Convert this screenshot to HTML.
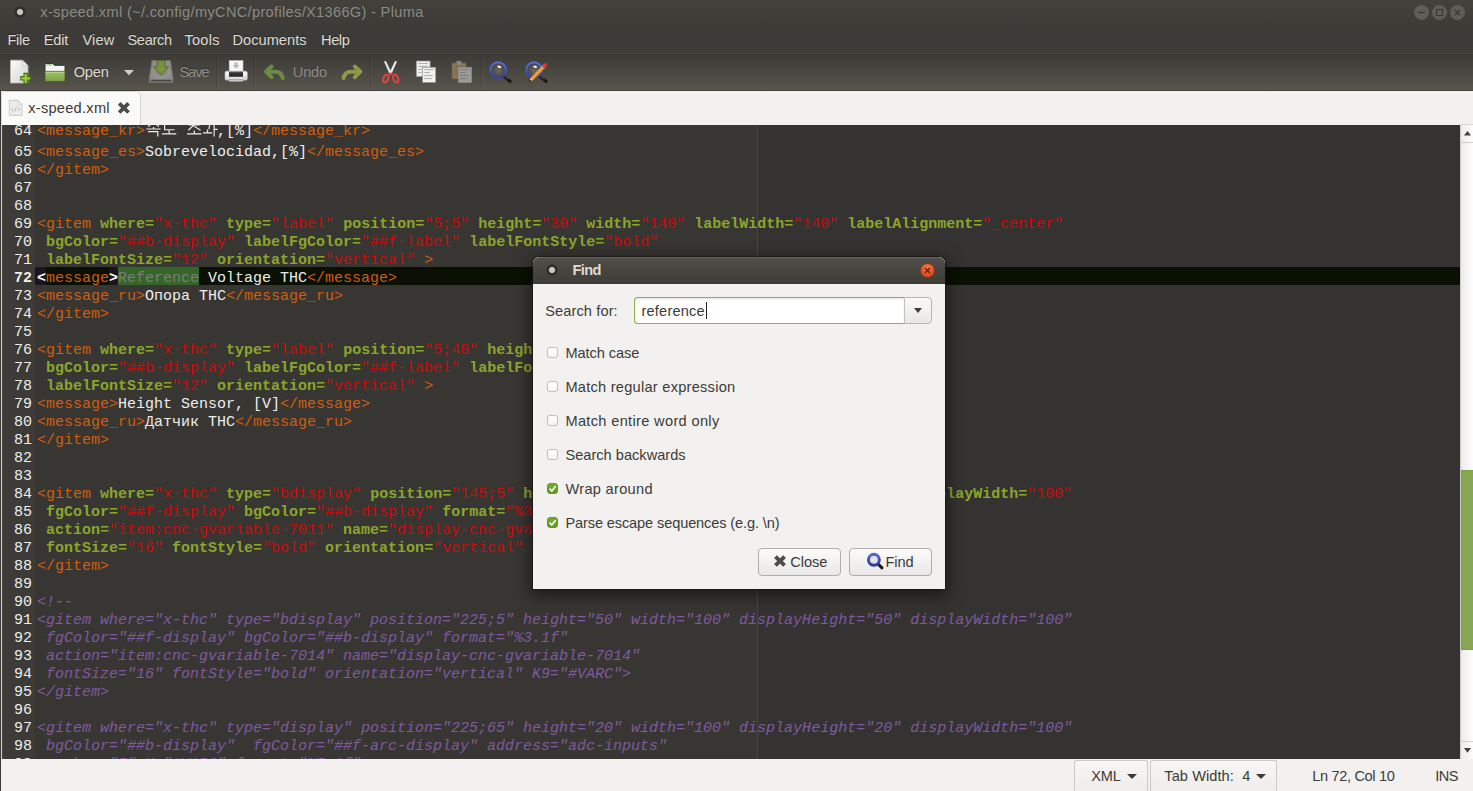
<!DOCTYPE html>
<html><head><meta charset="utf-8"><title>Pluma</title>
<style>
*{box-sizing:border-box;margin:0;padding:0}
html,body{width:1473px;height:791px;overflow:hidden;background:#3c3b37}
body{position:relative;font-family:"Liberation Sans",sans-serif;font-size:14.5px;color:#dfdbd2}
.abs{position:absolute}
.lbl{position:absolute;white-space:pre;line-height:1;font-size:14.6px;z-index:5}
/* title bar */
#titlebar{position:absolute;left:0;top:0;width:1473px;height:25px;background:linear-gradient(#42413c,#3c3b37)}
#title{left:40px;top:4px;color:#8b8a84;font-size:14.6px}
.wbtn{position:absolute;top:5px;width:15px;height:15px;border-radius:50%;background:#5e5d58}
/* menubar */
#menubar{position:absolute;left:0;top:25px;width:1473px;height:28px;background:#3c3b37}
.mi{top:7px;color:#dfdbd2;font-size:14.6px}
/* toolbar */
#toolbar{position:absolute;left:0;top:53px;width:1473px;height:38px;background:linear-gradient(#3b3a36 0,#57554c 36px,#3f3e38 36px,#3f3e38 37px);border-top:1px solid #44433e}
.tl{top:11px;font-size:14.6px}
.tsep{position:absolute;top:1px;width:2px;height:34px;background:linear-gradient(90deg,rgba(0,0,0,.16) 50%,rgba(255,255,255,.05) 50%)}
/* tab bar */
#tabbar{position:absolute;left:1px;top:91px;width:1472px;height:34px;background:#f2f1f0}
#tab{position:absolute;left:0;top:0;width:140px;height:34px;background:#fafaf9;border:1px solid #d9d6d1;border-bottom:none;border-radius:5px 5px 0 0}
/* editor */
#editor{position:absolute;left:1px;top:125px;width:1459px;height:634px;background:#383633;overflow:hidden;font-family:"Liberation Mono",monospace;font-size:15px;color:#eeeeec;border-left:2px solid #45443f}
#gutter{position:absolute;left:0;top:0;width:32px;height:634px;background:#3c3b37}
#rmar{position:absolute;left:755px;top:0;width:702px;height:634px;background:#343331}
#margin{position:absolute;left:754px;top:0;width:1px;height:634px;background:#4a4743}
.ln{position:absolute;left:0;width:1458px;height:18px;line-height:18px;white-space:pre}
.ln .no{position:absolute;left:0;top:3px;width:29px;text-align:right;color:#eeeeec}
.ln .tx{position:absolute;left:34px;top:3px}
.ln.cur{background:linear-gradient(90deg,transparent 32px,#0a1003 32px)}
.hb{position:absolute;top:0;height:18px}
.ln.cur .no{font-weight:bold}
.t{color:#d25d0a}
.a{color:#8aa62b;font-weight:bold}
.v{color:#cc0a0a}
.c{color:#7f5a9e;font-style:italic}
.bm{color:#fff;font-weight:bold}
.sel{color:#7b7d79}
.kr{display:inline-block;width:72px;height:18px;vertical-align:top}
/* scrollbar */
#vscroll{position:absolute;left:1460px;top:124px;width:13px;height:636px;background:linear-gradient(90deg,#ecebe9,#f4f3f2 5px,#fdfdfd);border-left:1px solid #d2cfcb;border-top:1px solid #d8d5d1;border-bottom:1px solid #d8d5d1}
.sline{position:absolute;left:0;width:12px;height:1px;background:#d2cfcb}
#thumb{position:absolute;left:1461px;top:470px;width:12px;height:180px;background:#87a752;border:1px solid #7b9c49;border-right:none}
/* status bar */
#status{position:absolute;left:1px;top:759px;width:1472px;height:32px;background:#f2f1f0;color:#3c3b37}
.sbtn{position:absolute;top:1px;height:32px;border:1px solid #cdcac5;border-bottom:none;border-radius:3px 3px 0 0;background:linear-gradient(#f7f6f5,#eeedeb)}
.sl{top:10px;color:#3c3b37;font-size:14.6px}
.tri{position:absolute;width:0;height:0;border-left:5px solid transparent;border-right:5px solid transparent;border-top:5.5px solid #3e3d3a}
/* dialog */
#dshadow{position:absolute;left:533px;top:257px;width:412px;height:332px;border-radius:6px 6px 0 0;box-shadow:0 0 0 1px rgba(20,19,18,.55),0 4px 16px 3px rgba(0,0,0,.5)}
#dialog{position:absolute;left:533px;top:257px;width:412px;height:332px;background:#f2f1f0;border-radius:6px 6px 0 0;overflow:hidden;color:#3c3b37}
#dtitle{position:absolute;left:0;top:0;width:412px;height:27px;background:linear-gradient(#4f4e48,#3d3c38);border-radius:6px 6px 0 0;border-top:1px solid #62615a}
.dl{color:#3c3b37;font-size:14.6px}
.cb{position:absolute;left:14.2px;width:11px;height:11px;border:1px solid #c4c1bc;border-radius:3px;background:linear-gradient(#ffffff,#f4f4f3);box-shadow:0 0 1px rgba(0,0,0,.12)}
.cb.on{background:linear-gradient(#74ae30,#5d981f);border-color:#64962a;box-shadow:none}
.btn{position:absolute;top:291px;height:28px;border:1px solid #b1aea8;border-radius:4px;background:linear-gradient(#fbfbfa,#e9e8e6)}
#edge{position:absolute;left:1px;top:125px;width:1px;height:634px;background:#d2cec9;z-index:2}
</style></head>
<body>
<!-- TITLE BAR -->
<div id="titlebar">
  <div class="abs" style="left:14px;top:6px;width:12px;height:12px;background:radial-gradient(circle at 50% 50%,#cbc7c1 0,#cbc7c1 2.6px,#2f2e2b 3.6px,#2f2e2b 5.2px,rgba(47,46,43,0) 6px);"></div>
  <div class="wbtn" style="left:1414px"><svg width="15" height="15"><path d="M4 7.5H11" stroke="#3a3935" stroke-width="1.3"/></svg></div>
  <div class="wbtn" style="left:1432px"><svg width="15" height="15"><rect x="4.5" y="4.5" width="6" height="6" fill="none" stroke="#3a3935" stroke-width="1.2"/></svg></div>
  <div class="wbtn" style="left:1450px"><svg width="15" height="15"><path d="M5 5L10 10M10 5L5 10" stroke="#3a3935" stroke-width="1.3"/></svg></div>
</div>
<!-- MENU -->
<div id="menubar">
</div>
<!-- TOOLBAR -->
<div id="toolbar">
<svg class="abs" style="left:0;top:0" width="560" height="36" viewBox="0 54 560 36">
<defs>
<linearGradient id="gpage" x1="0" y1="0" x2="1" y2="1"><stop offset="0" stop-color="#fdfdfd"/><stop offset="1" stop-color="#cfcfcf"/></linearGradient>
<linearGradient id="gfold" x1="0" y1="0" x2="0" y2="1"><stop offset="0" stop-color="#a3c46a"/><stop offset="1" stop-color="#7da043"/></linearGradient>
<linearGradient id="gring" x1="0" y1="0" x2="0" y2="1"><stop offset="0" stop-color="#5a6bd0"/><stop offset="1" stop-color="#3540a0"/></linearGradient>
<radialGradient id="gglass" cx="0.5" cy="0.55" r="0.6"><stop offset="0" stop-color="#6a6964"/><stop offset="1" stop-color="#3a3936"/></radialGradient>
<linearGradient id="gprn" x1="0" y1="0" x2="0" y2="1"><stop offset="0" stop-color="#ffffff"/><stop offset="1" stop-color="#d5d5d5"/></linearGradient>
</defs>
<!-- new document -->
<path d="M10.5 60.2H22.5L28 65.7V83H10.5Z" fill="url(#gpage)" stroke="#b9b9b6" stroke-width="0.8"/>
<path d="M22.5 60.2V65.7H28Z" fill="#f4f4f4" stroke="#b0b0ad" stroke-width="0.6"/>
<path d="M24 73.4H27.4V76.6H30.6V80H27.4V83.2H24V80H20.8V76.6H24Z" fill="#a3cc3b" stroke="#436f10" stroke-width="1.1"/>
<!-- folder open -->
<path d="M45 64.2Q45 63.5 45.8 63.5H52.6L54.4 65.3H64.3Q65 65.3 65 66V81H45Z" fill="#f4f4f2" stroke="#2f3a22" stroke-width="1"/>
<path d="M46.3 64.9H52" stroke="#7fa345" stroke-width="0.9"/>
<rect x="45" y="71.4" width="20" height="10" rx="0.8" fill="url(#gfold)" stroke="#4c6a25" stroke-width="0.9"/>
<path d="M45.6 72.3H64.4" stroke="#c3dc98" stroke-width="0.8"/>
<!-- dropdown -->
<path d="M124 70H134L129 75.2Z" fill="#d2cec4"/>
<!-- save (disabled) -->
<g opacity="0.75">
<path d="M152 60.6H170.5L173 79V82.2H149.2V79Z" fill="#a4a4a0" stroke="#83837f" stroke-width="0.8"/>
<path d="M149.6 79.3H172.6V82H149.6Z" fill="#7c7c78"/>
<path d="M151.5 80.6H171" stroke="#3d3d3a" stroke-width="1"/>
<ellipse cx="161" cy="71.5" rx="8" ry="6.5" fill="none" stroke="#bdbdb9" stroke-width="0.8"/>
<path d="M157.3 60.7H164.8V67H168.4L161 75L153.7 67H157.3Z" fill="#8fae3e" stroke="#56791d" stroke-width="1"/>
</g>
<!-- printer -->
<rect x="229.2" y="60.6" width="13.8" height="12" fill="#f6f6f6" stroke="#c9c9c9" stroke-width="0.6"/>
<path d="M234.6 62.5H237.6V65.2H239.6L236.1 68.8L232.6 65.2H234.6Z" fill="#b7b7b7"/>
<rect x="225" y="71.2" width="22.3" height="9" rx="1.6" fill="url(#gprn)" stroke="#bdbdbd" stroke-width="0.6"/>
<rect x="229" y="71.6" width="14" height="5.2" fill="#2b2d2e"/>
<path d="M229 72.6H243" stroke="#55595b" stroke-width="0.8"/>
<rect x="228.8" y="80" width="14.4" height="1.8" fill="#fafafa" stroke="#3a3a3a" stroke-width="0.5"/>
<circle cx="244.8" cy="77.6" r="0.7" fill="#7ddc3c"/>
<!-- undo -->
<g fill="none" stroke="#6f8a47" stroke-width="4" stroke-linecap="round" stroke-linejoin="round">
<path d="M271.5 66.6L266 71.6L271.5 77.2"/>
<path d="M267 71.8H275.5Q281.5 72 282.8 78"/>
</g>
<!-- redo -->
<g fill="none" stroke="#8c9a47" stroke-width="4" stroke-linecap="round" stroke-linejoin="round">
<path d="M354.8 66.6L360.3 71.6L354.8 77.2"/>
<path d="M359.3 71.8H350.8Q344.8 72 343.5 78"/>
</g>
<!-- scissors -->
<path d="M384.2 61.6L385.9 61.2L392 74L390 74.6Z" fill="#f4f4f4" stroke="#cfcfcf" stroke-width="0.4"/>
<path d="M396.8 61.6L395.1 61.2L389 74L391 74.6Z" fill="#ffffff" stroke="#cfcfcf" stroke-width="0.4"/>
<ellipse cx="385.7" cy="78.6" rx="2.3" ry="4.1" transform="rotate(22 385.7 78.6)" fill="none" stroke="#dc4444" stroke-width="2"/>
<ellipse cx="395.7" cy="78.6" rx="2.3" ry="4.1" transform="rotate(-22 395.7 78.6)" fill="none" stroke="#dc4444" stroke-width="2"/>
<path d="M388 75.2L390.7 73.2L393.2 75.2" fill="none" stroke="#c83737" stroke-width="1.6"/>
<!-- copy -->
<rect x="416.3" y="61" width="13.8" height="15.6" fill="#efefef" stroke="#8f8f8c" stroke-width="0.7"/>
<path d="M418.3 63.5H428M418.3 66.4H428M418.3 69.4H422M418.3 72.4H422" stroke="#a8a8a8" stroke-width="0.9"/>
<rect x="422.5" y="67.3" width="13.2" height="15.2" fill="#f1f1f1" stroke="#8f8f8c" stroke-width="0.7"/>
<path d="M424.3 69.7H433.7M424.3 72.6H430M424.3 75.6H432.8M424.3 78.6H432" stroke="#a4a4a4" stroke-width="0.9"/>
<!-- paste (disabled) -->
<rect x="452" y="63" width="14" height="15.8" rx="0.8" fill="#85714f" stroke="#77654a" stroke-width="0.6"/>
<rect x="453.5" y="64.6" width="11" height="12.8" fill="none" stroke="#95815f" stroke-width="0.6"/>
<rect x="456.3" y="61" width="5.4" height="4.6" fill="#8b8b87" stroke="#5f5f5c" stroke-width="0.6"/>
<rect x="458.3" y="67.3" width="13.3" height="15.2" fill="#9b9b97" stroke="#8a8a86" stroke-width="0.7"/>
<path d="M460 69.7H469.7M460 72.6H465.6M460 75.6H468.8M460 78.6H467.8" stroke="#7a7a77" stroke-width="0.9"/>
<!-- find -->
<path d="M503.6 75.9L510 81.4" stroke="#161616" stroke-width="3.2" stroke-linecap="round"/>
<path d="M504.4 75.7L508 78.8" stroke="#6a6a6a" stroke-width="1" stroke-linecap="round"/>
<circle cx="498.2" cy="70" r="7.7" fill="url(#gglass)" stroke="url(#gring)" stroke-width="2.3"/>
<ellipse cx="499.4" cy="66.8" rx="2" ry="1.1" transform="rotate(15 499.4 66.8)" fill="#ffffff"/>
<!-- find & replace -->
<path d="M539.5 75.9L546 81.4" stroke="#161616" stroke-width="3.2" stroke-linecap="round"/>
<path d="M540.3 75.7L544 78.8" stroke="#6a6a6a" stroke-width="1" stroke-linecap="round"/>
<circle cx="534" cy="70" r="7.7" fill="url(#gglass)" stroke="url(#gring)" stroke-width="2.3"/>
<ellipse cx="535.2" cy="66.8" rx="2" ry="1.1" transform="rotate(15 535.2 66.8)" fill="#ffffff"/>
<path d="M531.4 79.4L543 67.2" stroke="#e9932b" stroke-width="3.6"/>
<path d="M531.6 79.2L543.2 67" stroke="#f7c071" stroke-width="1" stroke-dasharray="0.7 0.5"/>
<path d="M543 67.2L544.3 65.8" stroke="#b9bcbb" stroke-width="3.6"/>
<path d="M544.3 65.8L545.3 64.8" stroke="#ef2b2b" stroke-width="3.6" stroke-linecap="round"/>
<path d="M529.8 81.1L530.8 78L532.8 80Z" fill="#f3d3a0"/>
<circle cx="530.1" cy="80.8" r="0.8" fill="#111"/>
</svg>
<div class="tsep" style="left:216px"></div>
<div class="tsep" style="left:254px"></div>
<div class="tsep" style="left:370px"></div>
<div class="tsep" style="left:481px"></div>

</div>
<!-- TABS -->
<div id="tabbar">
  <div id="tab"></div>
<svg class="abs" style="left:-1px;top:0" width="150" height="34" viewBox="0 91 150 34">
<path d="M9.4 100.3H18.2L22 104.1V115.4H9.4Z" fill="#ececeb" stroke="#c4c3c0" stroke-width="0.8"/>
<path d="M18.2 100.3V104.1H22Z" fill="#fafafa" stroke="#c4c3c0" stroke-width="0.6"/>
<path d="M13.2 107.6L11.4 109.4L13.2 111.2M18 107.6L19.8 109.4L18 111.2M16.4 107.3L14.8 111.5" fill="none" stroke="#b3b2af" stroke-width="0.9"/>
<path d="M119.2 103.3L128.5 112.5M128.5 103.3L119.2 112.5" stroke="#4d4c49" stroke-width="3.8"/>
</svg>

</div>
<!-- EDITOR -->
<div id="editor">
  <div id="gutter"></div>
  <div id="rmar"></div>
  <div id="margin"></div>
<div class="ln" style="top:-5px"><svg style="position:absolute;left:142px;top:0" width="73" height="18" viewBox="145 120 73 18" fill="none" stroke="#eeeeec" stroke-width="1.15"><g transform="translate(146,122)"><path d="M7.5 0.3L2 4.6M7.5 0.3L13 4.6M7.5 5V7M0.3 7H14.6M2 9.6H11.8V14.6"/></g><g transform="translate(161.6,122)"><path d="M12.5 1.5H3V7.7H13M7.5 7.7V11.8M0.3 11.8H14.7"/></g><g transform="translate(186.75,122)"><path d="M5.5 0.4H9.5M2 2.8H13M7.5 2.8L1.5 8.2M7.5 4.2L13.8 8.2M7.5 8.5V11.9M0.3 11.9H14.7"/></g><g transform="translate(203,122)"><path d="M1.5 1.5H6.8L5.9 7.4M4.5 7.4V10.8M0 10.8H9M11.1 0V14.6M11.1 7.3H14.6"/></g></svg><span class="no">64</span><span class="tx"><span class="t">&lt;message_kr&gt;</span><span class="kr"></span>,[%]<span class="t">&lt;/message_kr&gt;</span></span></div>
<div class="ln" style="top:16px"><span class="no">65</span><span class="tx"><span class="t">&lt;message_es&gt;</span>Sobrevelocidad,[%]<span class="t">&lt;/message_es&gt;</span></span></div>
<div class="ln" style="top:34px"><span class="no">66</span><span class="tx"><span class="t">&lt;/gitem&gt;</span></span></div>
<div class="ln" style="top:52px"><span class="no">67</span><span class="tx"></span></div>
<div class="ln" style="top:70px"><span class="no">68</span><span class="tx"></span></div>
<div class="ln" style="top:88px"><span class="no">69</span><span class="tx"><span class="t">&lt;gitem</span> <span class="a">where=</span><span class="v">"x-thc"</span> <span class="a">type=</span><span class="v">"label"</span> <span class="a">position=</span><span class="v">"5;5"</span> <span class="a">height=</span><span class="v">"30"</span> <span class="a">width=</span><span class="v">"140"</span> <span class="a">labelWidth=</span><span class="v">"140"</span> <span class="a">labelAlignment=</span><span class="v">"_center"</span></span></div>
<div class="ln" style="top:106px"><span class="no">70</span><span class="tx"> <span class="a">bgColor=</span><span class="v">"##b-display"</span> <span class="a">labelFgColor=</span><span class="v">"##f-label"</span> <span class="a">labelFontStyle=</span><span class="v">"bold"</span></span></div>
<div class="ln" style="top:124px"><span class="no">71</span><span class="tx"> <span class="a">labelFontSize=</span><span class="v">"12"</span> <span class="a">orientation=</span><span class="v">"vertical"</span> <span class="t">&gt;</span></span></div>
<div class="ln cur" style="top:142px"><div class="hb" style="left:32px;width:11px;background:#1e1420"></div><div class="hb" style="left:106px;width:9px;background:#1e1420"></div><div class="hb" style="left:115px;width:81px;background:#36652a"></div><span class="no">72</span><span class="tx"><span class="bm">&lt;</span><span class="t">message</span><span class="bm">&gt;</span><span class="sel">Reference</span> Voltage THC<span class="t">&lt;/message&gt;</span></span></div>
<div class="ln" style="top:160px"><span class="no">73</span><span class="tx"><span class="t">&lt;message_ru&gt;</span>Опора THC<span class="t">&lt;/message_ru&gt;</span></span></div>
<div class="ln" style="top:178px"><span class="no">74</span><span class="tx"><span class="t">&lt;/gitem&gt;</span></span></div>
<div class="ln" style="top:196px"><span class="no">75</span><span class="tx"></span></div>
<div class="ln" style="top:214px"><span class="no">76</span><span class="tx"><span class="t">&lt;gitem</span> <span class="a">where=</span><span class="v">"x-thc"</span> <span class="a">type=</span><span class="v">"label"</span> <span class="a">position=</span><span class="v">"5;40"</span> <span class="a">height=</span><span class="v">"30"</span> <span class="a">width=</span><span class="v">"140"</span> <span class="a">labelWidth=</span><span class="v">"140"</span></span></div>
<div class="ln" style="top:232px"><span class="no">77</span><span class="tx"> <span class="a">bgColor=</span><span class="v">"##b-display"</span> <span class="a">labelFgColor=</span><span class="v">"##f-label"</span> <span class="a">labelFontStyle=</span><span class="v">"bold"</span></span></div>
<div class="ln" style="top:250px"><span class="no">78</span><span class="tx"> <span class="a">labelFontSize=</span><span class="v">"12"</span> <span class="a">orientation=</span><span class="v">"vertical"</span> <span class="t">&gt;</span></span></div>
<div class="ln" style="top:268px"><span class="no">79</span><span class="tx"><span class="t">&lt;message&gt;</span>Height Sensor, [V]<span class="t">&lt;/message&gt;</span></span></div>
<div class="ln" style="top:286px"><span class="no">80</span><span class="tx"><span class="t">&lt;message_ru&gt;</span>Датчик THC<span class="t">&lt;/message_ru&gt;</span></span></div>
<div class="ln" style="top:304px"><span class="no">81</span><span class="tx"><span class="t">&lt;/gitem&gt;</span></span></div>
<div class="ln" style="top:322px"><span class="no">82</span><span class="tx"></span></div>
<div class="ln" style="top:340px"><span class="no">83</span><span class="tx"></span></div>
<div class="ln" style="top:358px"><span class="no">84</span><span class="tx"><span class="t">&lt;gitem</span> <span class="a">where=</span><span class="v">"x-thc"</span> <span class="a">type=</span><span class="v">"bdisplay"</span> <span class="a">position=</span><span class="v">"145;5"</span> <span class="a">height=</span><span class="v">"50"</span> <span class="a">width=</span><span class="v">"100"</span> <span class="a">displayHeight=</span><span class="v">"50"</span> <span class="a">displayWidth=</span><span class="v">"100"</span></span></div>
<div class="ln" style="top:376px"><span class="no">85</span><span class="tx"> <span class="a">fgColor=</span><span class="v">"##f-display"</span> <span class="a">bgColor=</span><span class="v">"##b-display"</span> <span class="a">format=</span><span class="v">"%3.1f"</span></span></div>
<div class="ln" style="top:394px"><span class="no">86</span><span class="tx"> <span class="a">action=</span><span class="v">"item:cnc-gvariable-7011"</span> <span class="a">name=</span><span class="v">"display-cnc-gvariable-7011"</span></span></div>
<div class="ln" style="top:412px"><span class="no">87</span><span class="tx"> <span class="a">fontSize=</span><span class="v">"16"</span> <span class="a">fontStyle=</span><span class="v">"bold"</span> <span class="a">orientation=</span><span class="v">"vertical"</span> <span class="a">K9=</span><span class="v">"#VARC"</span><span class="t">&gt;</span></span></div>
<div class="ln" style="top:430px"><span class="no">88</span><span class="tx"><span class="t">&lt;/gitem&gt;</span></span></div>
<div class="ln" style="top:448px"><span class="no">89</span><span class="tx"></span></div>
<div class="ln" style="top:466px"><span class="no">90</span><span class="tx"><span class="c">&lt;!--</span></span></div>
<div class="ln" style="top:484px"><span class="no">91</span><span class="tx"><span class="c">&lt;gitem where="x-thc" type="bdisplay" position="225;5" height="50" width="100" displayHeight="50" displayWidth="100"</span></span></div>
<div class="ln" style="top:502px"><span class="no">92</span><span class="tx"><span class="c"> fgColor="##f-display" bgColor="##b-display" format="%3.1f"</span></span></div>
<div class="ln" style="top:520px"><span class="no">93</span><span class="tx"><span class="c"> action="item:cnc-gvariable-7014" name="display-cnc-gvariable-7014"</span></span></div>
<div class="ln" style="top:538px"><span class="no">94</span><span class="tx"><span class="c"> fontSize="16" fontStyle="bold" orientation="vertical" K9="#VARC"&gt;</span></span></div>
<div class="ln" style="top:556px"><span class="no">95</span><span class="tx"><span class="c">&lt;/gitem&gt;</span></span></div>
<div class="ln" style="top:574px"><span class="no">96</span><span class="tx"></span></div>
<div class="ln" style="top:592px"><span class="no">97</span><span class="tx"><span class="c">&lt;gitem where="x-thc" type="display" position="225;65" height="20" width="100" displayHeight="20" displayWidth="100"</span></span></div>
<div class="ln" style="top:610px"><span class="no">98</span><span class="tx"><span class="c"> bgColor="##b-display"  fgColor="##f-arc-display" address="adc-inputs"</span></span></div>
<div class="ln" style="top:628px"><span class="no">99</span><span class="tx"><span class="c"> number="5" K="#VARC" format="%5.1f"</span></span></div>
</div>
<div id="edge"></div>
<div id="vscroll"><div class="sline" style="top:17px"></div><div class="sline" style="top:616px"></div><svg class="abs" style="left:0;top:0" width="12" height="634"><path d="M3 10.6H10L6.5 6Z" fill="#403f3c"/><path d="M3 623.1H10L6.5 627.7Z" fill="#403f3c"/></svg></div>
<div id="thumb"></div>
<!-- STATUS -->
<div id="status">
  <div class="sbtn" style="left:1073px;width:74px"></div>
  <div class="sbtn" style="left:1149px;width:127px"></div>
  <div class="tri" style="left:1126px;top:15px"></div>
  <div class="tri" style="left:1255px;top:15px"></div>
</div>
<!-- DIALOG -->
<div id="dshadow"></div>
<div id="dialog">
  <div id="dtitle"></div>
  <div class="abs" style="left:13px;top:7px;width:12px;height:12px;background:radial-gradient(circle at 50% 50%,#cbc7c1 0,#cbc7c1 2.6px,#2f2e2b 3.6px,#2f2e2b 5.2px,rgba(47,46,43,0) 6px);"></div>
  <div class="abs" style="left:387px;top:6px;width:15px;height:15px;border-radius:50%;background:radial-gradient(circle at 50% 30%,#f27a50,#de4b18 75%);border:1px solid #9d3310"><svg width="13" height="13" style="display:block"><path d="M4 4L9 9M9 4L4 9" stroke="#5a1d0a" stroke-width="1.3"/></svg></div>
  <div class="abs" style="left:101px;top:40px;width:298px;height:27px;border:1px solid #b8b5af;border-radius:4px;background:linear-gradient(#fafafa,#e8e7e5)"></div>
  <div class="abs" style="left:101px;top:40px;width:270px;height:27px;border:1px solid #8ab545;border-right:none;border-radius:4px 0 0 4px;background:#fff;box-shadow:inset 0 1px 2px rgba(0,0,0,.12)"></div>
  <div class="abs" style="left:371px;top:41px;width:1px;height:25px;background:#c4c1bc"></div>
  <div class="abs" style="left:173px;top:45px;width:1px;height:17px;background:#222"></div>
  <div class="tri" style="left:380.5px;top:51.4px;border-left-width:4.5px;border-right-width:4.5px;border-top-width:5.5px"></div>
<div class="cb" style="top:89.5px"></div>
<div class="cb" style="top:123.5px"></div>
<div class="cb" style="top:157.5px"></div>
<div class="cb" style="top:191.5px"></div>
<div class="cb on" style="top:225.5px"><svg width="9" height="9" style="display:block"><path d="M1.6 4.6L3.8 7L7.6 2.2" fill="none" stroke="#fff" stroke-width="1.7"/></svg></div>
<div class="cb on" style="top:259.5px"><svg width="9" height="9" style="display:block"><path d="M1.6 4.6L3.8 7L7.6 2.2" fill="none" stroke="#fff" stroke-width="1.7"/></svg></div>
  <div class="btn" style="left:225px;width:83px"></div>
  <div class="btn" style="left:316px;width:83px"></div>
<svg class="abs" style="left:225px;top:291px" width="180" height="28" viewBox="758 548 180 28">
<defs>
<linearGradient id="gring2" x1="0" y1="0" x2="0" y2="1"><stop offset="0" stop-color="#5465c8"/><stop offset="1" stop-color="#2f3a98"/></linearGradient>
<radialGradient id="gglass2" cx="0.5" cy="0.5" r="0.6"><stop offset="0" stop-color="#e9e9ee"/><stop offset="1" stop-color="#c9c9d4"/></radialGradient>
</defs>
<path d="M775.4 556.6L784.6 565.4M784.6 556.6L775.4 565.4" stroke="#4d4c49" stroke-width="3.9"/>
<path d="M878.4 564.4L882 567.8" stroke="#161616" stroke-width="3" stroke-linecap="round"/>
<circle cx="873.9" cy="559.8" r="5.5" fill="url(#gglass2)" stroke="url(#gring2)" stroke-width="2.9"/>
</svg>

</div>
<div class="lbl" style="left:40.30px;top:5.0px;color:#8b8a84;letter-spacing:0.323px">x-speed.xml (~/.config/myCNC/profiles/X1366G) - Pluma</div>
<div class="lbl" style="left:7.50px;top:33.0px;color:#dfdbd2;letter-spacing:-0.333px;text-shadow:0 -1px 0 rgba(0,0,0,.35)">File</div>
<div class="lbl" style="left:43.70px;top:33.0px;color:#dfdbd2;letter-spacing:-0.167px;text-shadow:0 -1px 0 rgba(0,0,0,.35)">Edit</div>
<div class="lbl" style="left:82.40px;top:33.0px;color:#dfdbd2;letter-spacing:0.200px;text-shadow:0 -1px 0 rgba(0,0,0,.35)">View</div>
<div class="lbl" style="left:127.40px;top:33.0px;color:#dfdbd2;letter-spacing:-0.280px;text-shadow:0 -1px 0 rgba(0,0,0,.35)">Search</div>
<div class="lbl" style="left:184.40px;top:33.0px;color:#dfdbd2;letter-spacing:0.250px;text-shadow:0 -1px 0 rgba(0,0,0,.35)">Tools</div>
<div class="lbl" style="left:232.40px;top:33.0px;color:#dfdbd2;letter-spacing:0.050px;text-shadow:0 -1px 0 rgba(0,0,0,.35)">Documents</div>
<div class="lbl" style="left:321.00px;top:33.0px;color:#dfdbd2;letter-spacing:-0.400px;text-shadow:0 -1px 0 rgba(0,0,0,.35)">Help</div>
<div class="lbl" style="left:73.70px;top:65.0px;color:#dfdbd2;letter-spacing:-0.167px;text-shadow:0 -1px 0 rgba(0,0,0,.35)">Open</div>
<div class="lbl" style="left:179.40px;top:65.0px;color:#8f8d86;letter-spacing:-1.000px;text-shadow:0 -1px 0 rgba(0,0,0,.35)">Save</div>
<div class="lbl" style="left:292.80px;top:65.0px;color:#8f8d86;letter-spacing:-0.167px;text-shadow:0 -1px 0 rgba(0,0,0,.35)">Undo</div>
<div class="lbl" style="left:28.20px;top:101.0px;color:#3c3b37;letter-spacing:0.270px">x-speed.xml</div>
<div class="lbl" style="left:1091.20px;top:769.0px;color:#3c3b37;letter-spacing:-0.200px">XML</div>
<div class="lbl" style="left:1164.30px;top:769.0px;color:#3c3b37;letter-spacing:0.067px">Tab Width:  4</div>
<div class="lbl" style="left:1312.30px;top:769.0px;color:#3c3b37;letter-spacing:-0.358px">Ln 72, Col 10</div>
<div class="lbl" style="left:1435.30px;top:769.0px;color:#3c3b37;letter-spacing:-0.600px">INS</div>
<div class="lbl" style="left:572.50px;top:263.0px;color:#dfdbd2;letter-spacing:-0.667px;font-weight:bold">Find</div>
<div class="lbl" style="left:545.20px;top:304.0px;color:#3c3b37;letter-spacing:0.110px">Search for:</div>
<div class="lbl" style="left:641.50px;top:304.0px;color:#3c3b37;letter-spacing:0.188px">reference</div>
<div class="lbl" style="left:565.40px;top:346.0px;color:#3c3b37;letter-spacing:-0.078px">Match case</div>
<div class="lbl" style="left:565.40px;top:380.0px;color:#3c3b37;letter-spacing:0.257px">Match regular expression</div>
<div class="lbl" style="left:565.40px;top:414.0px;color:#3c3b37;letter-spacing:0.333px">Match entire word only</div>
<div class="lbl" style="left:565.40px;top:448.0px;color:#3c3b37;letter-spacing:0.013px">Search backwards</div>
<div class="lbl" style="left:565.40px;top:482.0px;color:#3c3b37;letter-spacing:0.310px">Wrap around</div>
<div class="lbl" style="left:565.40px;top:516.0px;color:#3c3b37;letter-spacing:-0.129px">Parse escape sequences (e.g. \n)</div>
<div class="lbl" style="left:790.30px;top:555.0px;color:#3c3b37;letter-spacing:-0.075px">Close</div>
<div class="lbl" style="left:885.40px;top:555.0px;color:#3c3b37;letter-spacing:-0.067px">Find</div>
</body></html>
